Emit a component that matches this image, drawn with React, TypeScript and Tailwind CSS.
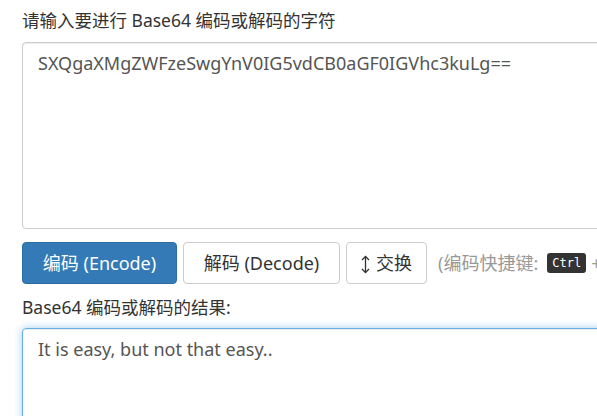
import React from "react";

const font = { fontFamily: '"Noto Sans", "Noto Sans CJK SC", sans-serif' };

function SwapIcon() {
  return (
    <svg width="9" height="19" viewBox="0 0 9 19" className="inline-block">
      <path d="M4.5 1.5 L4.5 17.5" stroke="#333" strokeWidth="1.3" fill="none" />
      <path d="M1 5 L4.5 1.5 L8 5" stroke="#333" strokeWidth="1.3" fill="none" />
      <path d="M1 14 L4.5 17.5 L8 14" stroke="#333" strokeWidth="1.3" fill="none" />
    </svg>
  );
}

export default function App() {
  return (
    <div className="w-[597px] h-[416px] overflow-hidden bg-white text-[#333]" style={font}>
      <div className="w-[900px] pl-[22px] pt-[7px]">
        <div className="text-[17.5px] leading-[26px] h-[26px] whitespace-nowrap">请输入要进行 Base64 编码或解码的字符</div>
        <div className="mt-[9px] h-[187px] rounded-[4px] border border-[#ccc] shadow-[inset_0_1px_1px_rgba(0,0,0,0.075)] px-[15px] pt-[7px] text-[18px] leading-[26px] text-[#555]">
          SXQgaXMgZWFzeSwgYnV0IG5vdCB0aGF0IGVhc3kuLg==
        </div>
        <div className="mt-[13px] flex items-center">
          <div className="h-[42px] w-[155px] flex items-center justify-center rounded-[4px] bg-[#337ab7] border border-[#2e6da4] text-white text-[18px] whitespace-nowrap">
            编码 (Encode)
          </div>
          <div className="ml-[6px] h-[42px] w-[157px] flex items-center justify-center rounded-[4px] bg-white border border-[#ccc] text-[#333] text-[18px] whitespace-nowrap">
            解码 (Decode)
          </div>
          <div className="ml-[6px] h-[42px] w-[81px] flex items-center justify-center gap-[6px] rounded-[4px] bg-white border border-[#ccc] text-[#333] text-[18px] whitespace-nowrap">
            <span className="pt-[3px] flex"><SwapIcon /></span>
            <span>交换</span>
          </div>
          <div className="ml-[11px] flex items-center text-[18px] text-[#999] whitespace-nowrap">
            <span>(编码快捷键:</span>
            <span
              className="ml-[9px] rounded-[3px] bg-[#333] text-white text-[12px] leading-[20px] px-[5px]"
              style={{ fontFamily: '"DejaVu Sans Mono", monospace' }}
            >
              Ctrl
            </span>
            <span className="ml-[5px]">+</span>
          </div>
        </div>
        <div className="mt-[10px] text-[17.5px] leading-[26px] h-[26px] whitespace-nowrap">Base64 编码或解码的结果:</div>
        <div className="mt-[8px] h-[200px] rounded-[4px] border border-[#66afe9] shadow-[inset_0_1px_1px_rgba(0,0,0,0.075),0_0_8px_rgba(102,175,233,0.6)] px-[15px] pt-[7px] text-[18px] leading-[26px] text-[#555]">
          It is easy, but not that easy..
        </div>
      </div>
    </div>
  );
}
